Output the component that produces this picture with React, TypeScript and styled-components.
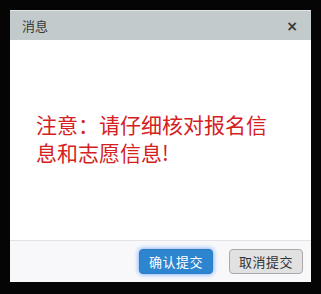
import React from 'react';
import styled, { createGlobalStyle } from 'styled-components';

const GlobalStyle = createGlobalStyle`
	html, body {
		margin: 0;
		padding: 0;
		background: #050505;
	}
	body {
		font-family: "Noto Sans CJK SC", "Liberation Sans", sans-serif;
	}
`;

const Page = styled.div`
	width: 321px;
	height: 294px;
	padding: 10px 10px 0 10px;
	box-sizing: border-box;
	background: #050505;
`;

const Dialog = styled.div`
	width: 301px;
	display: flex;
	flex-direction: column;
	background: #fff;
`;

const Header = styled.div`
	height: 30px;
	display: flex;
	align-items: center;
	justify-content: space-between;
	padding: 0 13px 0 12px;
	background: #c2cacb;
	border-top: 1px solid #e2e6e7;
	box-sizing: border-box;
`;

const Title = styled.span`
	font-size: 13px;
	color: #3a3a3a;
`;

const Close = styled.span`
	font-family: "DejaVu Sans", sans-serif;
	font-size: 14px;
	font-weight: bold;
	color: #3a3a3a;
	line-height: 1;
`;

const Body = styled.div`
	height: 200px;
	display: flex;
	align-items: center;
	padding: 0 30px 0 26px;
	box-sizing: border-box;
`;

const Message = styled.p`
	margin: 0 0 4px 0;
	font-size: 21px;
	line-height: 28px;
	color: #d4211f;
`;

const Footer = styled.div`
	height: 42px;
	display: flex;
	align-items: center;
	justify-content: flex-end;
	gap: 16px;
	padding: 0 8px;
	background: #f8f8fa;
	border-top: 1px solid #e3e3e6;
	box-sizing: border-box;
`;

const Button = styled.button<{ primary?: boolean }>`
	width: 74px;
	height: 25px;
	padding: 0;
	font-family: "Noto Sans CJK SC", sans-serif;
	font-size: 13px;
	border-radius: 4px;
	cursor: pointer;
	color: ${p => (p.primary ? '#fff' : '#333')};
	background: ${p => (p.primary ? '#2d84cf' : '#e1e1e1')};
	border: 1px solid ${p => (p.primary ? '#2a7cc4' : '#a9a9a9')};
	box-shadow: ${p => (p.primary ? '0 0 4px 1px #8fb8ff' : 'none')};
	letter-spacing: 0.5px;
`;

export default function App() {
	return (
		<>
			<GlobalStyle />
			<Page>
				<Dialog>
					<Header>
						<Title>消息</Title>
						<Close>×</Close>
					</Header>
					<Body>
						<Message>注意：请仔细核对报名信息和志愿信息!</Message>
					</Body>
					<Footer>
						<Button primary>确认提交</Button>
						<Button>取消提交</Button>
					</Footer>
				</Dialog>
			</Page>
		</>
	);
}
